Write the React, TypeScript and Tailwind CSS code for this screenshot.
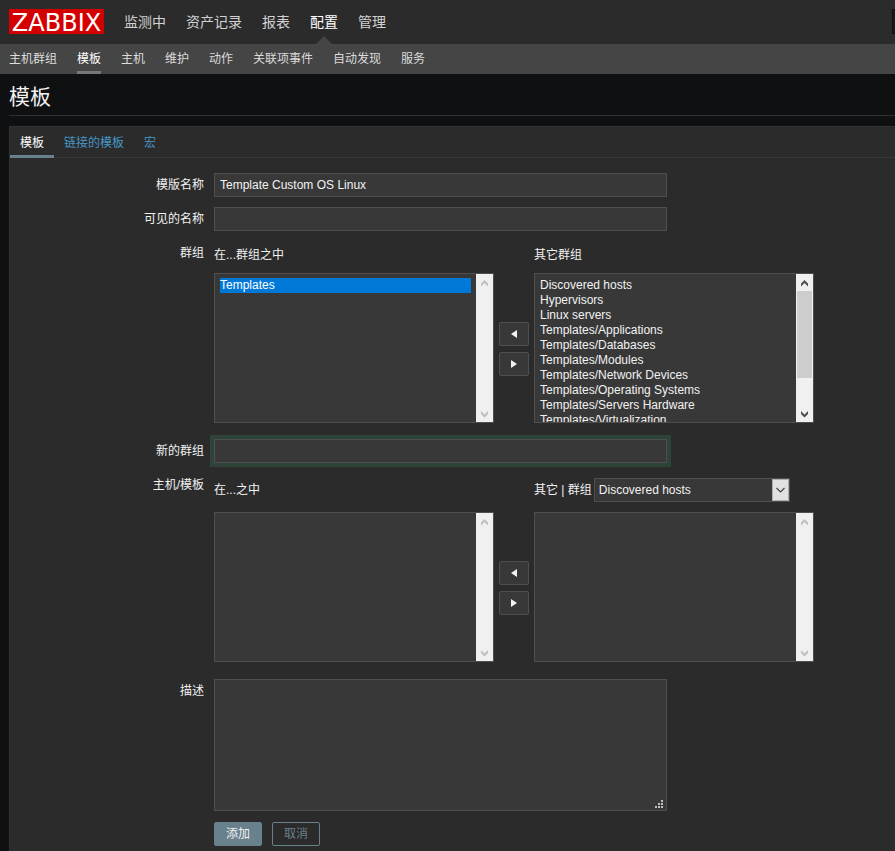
import { useState } from "react";
import type { ReactNode } from "react";

const mainMenu = ["监测中", "资产记录", "报表", "配置", "管理"];
const subMenu = ["主机群组", "模板", "主机", "维护", "动作", "关联项事件", "自动发现", "服务"];
const tabs = ["模板", "链接的模板", "宏"];
const otherGroups = [
  "Discovered hosts",
  "Hypervisors",
  "Linux servers",
  "Templates/Applications",
  "Templates/Databases",
  "Templates/Modules",
  "Templates/Network Devices",
  "Templates/Operating Systems",
  "Templates/Servers Hardware",
  "Templates/Virtualization",
];

const field =
  "block h-6 w-full max-w-[453px] border border-[#4f4f4f] bg-[#383838] px-[5px] text-[#f2f2f2] outline-none";

function Row({ label, htmlFor, children }: { label: string; htmlFor: string; children: ReactNode }) {
  return (
    <div className="flex gap-[10px]">
      <label htmlFor={htmlFor} className="w-[194px] shrink-0 text-right leading-6">
        {label}
      </label>
      <div className="min-w-0 flex-1">{children}</div>
    </div>
  );
}

function ScrollArrow({ down }: { down?: boolean }) {
  return (
    <svg width="17" height="17" viewBox="0 0 17 17" className="shrink-0" fill="currentColor">
      {down ? (
        <path d="M5 6v3l3.500 3.500L12 9V6L8.500 9.500z" />
      ) : (
        <path d="M5 12.500v-3L8.500 6 12 9.500v3L8.500 9z" />
      )}
    </svg>
  );
}

function ListBox({ id, items, selected, scroll }: { id: string; items: string[]; selected?: string; scroll?: boolean }) {
  return (
    <div className="flex h-[150px] w-[280px] border border-[#4f4f4f] bg-[#383838]">
      <select
        id={id}
        aria-label={id}
        multiple
        defaultValue={selected ? [selected] : []}
        className="h-full min-w-0 flex-1 appearance-none overflow-y-auto px-[5px] py-1 outline-none [scrollbar-width:none]"
      >
        {items.map((item) => (
          <option
            key={item}
            value={item}
            className="h-[15px] min-h-0 p-0 leading-[15px] checked:bg-linear-to-r checked:from-[#0078d7] checked:to-[#0078d7] checked:[-webkit-text-fill-color:#ffffff]"
          >
            {item}
          </option>
        ))}
      </select>
      <div
        className={
          "flex w-[17px] shrink-0 flex-col bg-[#f0f0f0] " + (scroll ? "text-[#505050]" : "text-[#bfbfbf]")
        }
      >
        <ScrollArrow />
        <div className="flex-1 px-px">{scroll && <div className="h-[87px] bg-[#cdcdcd]" />}</div>
        <ScrollArrow down />
      </div>
    </div>
  );
}

function MoveButtons() {
  const button =
    "flex h-6 w-[30px] items-center justify-center rounded-xs border border-[#4f4f4f] bg-[#383838] text-[#f2f2f2]";
  return (
    <div className="flex w-10 shrink-0 flex-col items-center justify-center gap-[6px] pt-[2px]">
      <button type="button" aria-label="left" className={button}>
        <svg width="6" height="8" viewBox="0 0 6 8" fill="currentColor">
          <path d="M6 0v8L0 4z" />
        </svg>
      </button>
      <button type="button" aria-label="right" className={button}>
        <svg width="6" height="8" viewBox="0 0 6 8" fill="currentColor">
          <path d="M0 0v8l6-4z" />
        </svg>
      </button>
    </div>
  );
}

export default function App() {
  const [name, setName] = useState("Template Custom OS Linux");

  return (
    <div className="flex min-h-screen flex-col bg-[#0e1012] font-['Liberation_Sans','Noto_Sans_CJK_SC',sans-serif] text-xs text-[#f2f2f2]">
      <header>
        <div className="flex h-11 items-center bg-[#2b2b2b] pl-[9px]">
          <a
            href="#"
            className="mb-px flex h-[25px] w-[95px] items-center justify-center bg-[#d40000] pt-[2px] font-['DejaVu_Sans',sans-serif] text-2xl leading-none text-white"
          >
            ZABBIX
          </a>
          <nav className="flex h-full gap-5 pl-5 text-sm text-[#d2d2d2]">
            {mainMenu.map((item) => (
              <a
                key={item}
                href="#"
                className={"relative flex items-center " + (item === "配置" ? "text-white" : "")}
              >
                {item}
                {item === "配置" && (
                  <svg
                    width="16"
                    height="8"
                    viewBox="0 0 16 8"
                    className="absolute bottom-0 left-1/2 -translate-x-1/2"
                    fill="#454545"
                  >
                    <path d="M0 8l8-8 8 8z" />
                  </svg>
                )}
              </a>
            ))}
          </nav>
          <input aria-label="搜索" className="mb-px ml-auto h-[25px] w-[3px] border border-r-0 border-[#0e1012] bg-[#1a1a1a]" />
        </div>
        <nav className="flex h-[30px] gap-5 bg-[#454545] px-[9px] text-[#dcdcdc]">
          {subMenu.map((item) => (
            <a
              key={item}
              href="#"
              className={
                "flex items-center border-y-3 border-t-transparent " +
                (item === "模板" ? "border-b-[#787878] text-white" : "border-b-transparent")
              }
            >
              {item}
            </a>
          ))}
        </nav>
      </header>

      <main className="flex flex-1 flex-col pl-[9px]">
        <h1 className="mb-[10px] h-[42px] border-b border-[#303030] pt-[7px] text-[21px] leading-8">模板</h1>

        <div className="flex-1 border-t border-l border-[#303234] bg-[#2b2b2b]">
          <div className="flex h-[31px] border-b border-[#383838]">
            {tabs.map((tab, i) => (
              <a
                key={tab}
                href="#"
                className={
                  "flex h-[31px] items-center border-y-3 border-t-transparent px-[10px] " +
                  (i === 0 ? "border-b-[#69808d] text-white" : "border-b-transparent text-[#4796c4]")
                }
              >
                {tab}
              </a>
            ))}
          </div>

          <form className="flex flex-col gap-[10px] pt-[15px] pb-[5px]" onSubmit={(e) => e.preventDefault()}>
            <Row label="模版名称" htmlFor="template_name">
              <input id="template_name" className={field} value={name} onChange={(e) => setName(e.target.value)} />
            </Row>
            <Row label="可见的名称" htmlFor="visible_name">
              <input id="visible_name" className={field} />
            </Row>
            <Row label="群组" htmlFor="groups">
              <div className="mb-1 flex h-7 items-center">
                <span className="w-80">在...群组之中</span>
                <span>其它群组</span>
              </div>
              <div className="mb-[6px] flex">
                <ListBox id="groups" items={["Templates"]} selected="Templates" />
                <MoveButtons />
                <ListBox id="other_groups" items={otherGroups} scroll />
              </div>
            </Row>
            <Row label="新的群组" htmlFor="new_group">
              <input id="new_group" className={field + " ring-4 ring-[#2f4439]"} />
            </Row>
            <Row label="主机/模板" htmlFor="hosts">
              <div className="mb-[5px] flex h-[34px] items-center">
                <span className="w-80">在...之中</span>
                <label htmlFor="group_filter" className="pr-[2px]">
                  其它 | 群组
                </label>
                <div className="relative w-[196px]">
                  <select
                    id="group_filter"
                    className="block h-6 w-full appearance-none border border-[#4f4f4f] bg-[#383838] pr-5 pl-1 outline-none"
                  >
                    <option>Discovered hosts</option>
                  </select>
                  <svg
                    width="17"
                    height="22"
                    viewBox="0 0 17 22"
                    className="pointer-events-none absolute top-px right-px"
                    fill="none"
                  >
                    <rect x="0.5" y="0.5" width="16" height="21" fill="#e1e1e1" stroke="#adadad" />
                    <path d="M4.500 9l4 4 4-4" stroke="#444444" strokeWidth="1.200" />
                  </svg>
                </div>
              </div>
              <div className="mb-[7px] flex">
                <ListBox id="hosts" items={[]} />
                <MoveButtons />
                <ListBox id="other_hosts" items={[]} />
              </div>
            </Row>
            <Row label="描述" htmlFor="description">
              <div className="relative max-w-[453px]">
                <textarea
                  id="description"
                  className="block h-[132px] w-full resize-none border border-[#4f4f4f] bg-[#383838] p-[5px] outline-none"
                />
                <svg
                  width="8"
                  height="8"
                  viewBox="0 0 8 8"
                  className="pointer-events-none absolute right-1 bottom-[3px]"
                  fill="#c0c0c0"
                >
                  <path d="M6 0h2v2H6zM3 3h2v2H3zM6 3h2v2H6zM0 6h2v2H0zM3 6h2v2H3zM6 6h2v2H6z" />
                </svg>
              </div>
              <div className="mt-[11px] flex gap-[10px]">
                <button type="submit" className="h-6 w-12 rounded-xs border border-[#69808d] bg-[#69808d]">
                  添加
                </button>
                <button type="button" className="h-6 w-12 rounded-xs border border-[#69808d] text-[#69808d]">
                  取消
                </button>
              </div>
            </Row>
          </form>
        </div>
      </main>
    </div>
  );
}
